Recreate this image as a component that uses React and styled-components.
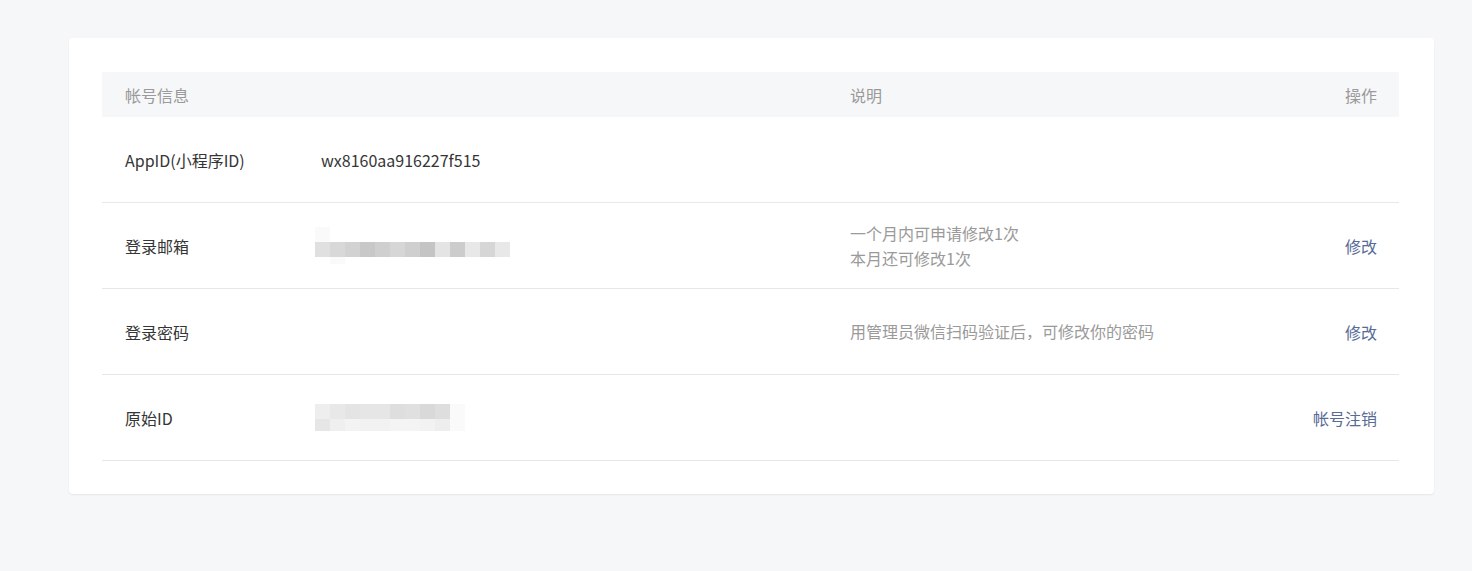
import styled, {createGlobalStyle} from "styled-components";

const GlobalStyle = createGlobalStyle`
  html, body {
    margin: 0;
    padding: 0;
    background: #f6f7f9;
  }
  body {
    font-family: "Noto Sans CJK SC", "Noto Sans", sans-serif;
    color: #353535;
  }
`;

const colors = {
    text: "#353535",
    gray: "#9a9a9a",
    link: "#576b95",
    line: "#e7e7eb",
    headBg: "#f6f7f9"
};

// pixelated blur used to hide the private values
const emailMosaic = [
    ["#fafafa"],
    ["#e0e0e0", "#d8d8d8", "#d2d2d2", "#c8c8c8", "#cfcfcf", "#d6d6d6", "#cfcfcf", "#c4c4c4", "#e4e4e4", "#cccccc", "#e8e8e8", "#d6d6d6", "#e8e8e8"],
    [null, "#fafafa"]
];
const idMosaic = [
    ["#eeeeee", "#e8e8e8", "#e4e4e4", "#e6e6e6", "#e6e6e6", "#dedede", "#e0e0e0", "#d9d9d9", "#dedede", "#fafafa"],
    ["#e6e6e6", "#efefef", "#f3f3f3", "#f2f2f2", "#f2f2f2", "#f4f4f4", "#f4f4f4", "#f2f2f2", "#eeeeee", "#fafafa"]
];

const Mosaic = ({cells, rowHeights}) => {
    const cols = Math.max(...cells.map(r => r.length));
    const height = rowHeights.reduce((a, b) => a + b, 0);
    let y = 0;
    return (
        <svg width={cols * 15} height={height} viewBox={`0 0 ${cols * 15} ${height}`}>
            {cells.map((row, ri) => {
                const top = y;
                y += rowHeights[ri];
                return row.map((c, ci) => c && (
                    <rect key={ri + "-" + ci} x={ci * 15} y={top} width="15" height={rowHeights[ri]} fill={c}/>
                ));
            })}
        </svg>
    );
};

const getRows = () => [
    {label: "AppID(小程序ID)", value: <Value>wx8160aa916227f515</Value>},
    {
        label: "登录邮箱",
        value: <MosaicBox><Mosaic cells={emailMosaic} rowHeights={[15, 15, 7]}/></MosaicBox>,
        desc: ["一个月内可申请修改1次", "本月还可修改1次"],
        action: "修改"
    },
    {label: "登录密码", desc: ["用管理员微信扫码验证后，可修改你的密码"], action: "修改"},
    {
        label: "原始ID",
        value: <MosaicBox><Mosaic cells={idMosaic} rowHeights={[15, 12]}/></MosaicBox>,
        action: "帐号注销"
    }
];

export default function App() {
    const rows = getRows();
    return (
        <>
            <GlobalStyle/>
            <Page>
                <Card>
                    <Table>
                        <HeadRow>
                            <Cell>帐号信息</Cell>
                            <Cell/>
                            <Cell>说明</Cell>
                            <ActionCell>操作</ActionCell>
                        </HeadRow>
                        {rows.map(r => (
                            <Row key={r.label}>
                                <Cell>{r.label}</Cell>
                                <ValueCell>{r.value}</ValueCell>
                                <Desc>
                                    {r.desc && r.desc.map(d => <div key={d}>{d}</div>)}
                                </Desc>
                                <ActionCell>
                                    {r.action && <Link href="#" onClick={e => e.preventDefault()}>{r.action}</Link>}
                                </ActionCell>
                            </Row>
                        ))}
                    </Table>
                </Card>
            </Page>
        </>
    );
}

const Page = styled.div`
  min-height: 571px;
  padding: 38px 38px 0 69px;
  box-sizing: border-box;
`;

const Card = styled.div`
  background: #fff;
  border-radius: 4px;
  box-shadow: 0 1px 2px rgba(0, 0, 0, 0.07);
  padding: 34px 35px 33px 33px;
`;

const Table = styled.div`
  display: flex;
  flex-direction: column;
  font-size: 16px;
`;

const gridCols = `
  display: grid;
  grid-template-columns: 213px 512px 1fr 160px;
  align-items: center;
`;

const HeadRow = styled.div`
  ${gridCols};
  height: 45px;
  background: ${colors.headBg};
  color: ${colors.gray};
`;

const Row = styled.div`
  ${gridCols};
  height: 85px;
  border-bottom: 1px solid ${colors.line};
  color: ${colors.text};
`;

const Cell = styled.div`
  padding-left: 23px;
  line-height: 24px;
`;

const ValueCell = styled.div`
  display: flex;
  align-items: center;
`;

const Value = styled.span`
  padding-left: 6px;
`;

const MosaicBox = styled.div`
  display: flex;
  svg {
    display: block;
  }
`;

const Desc = styled.div`
  padding-left: 23px;
  color: ${colors.gray};
  line-height: 25px;
`;

const ActionCell = styled.div`
  text-align: right;
  padding-right: 22px;
  line-height: 24px;
`;

const Link = styled.a`
  color: ${colors.link};
  text-decoration: none;
`;
